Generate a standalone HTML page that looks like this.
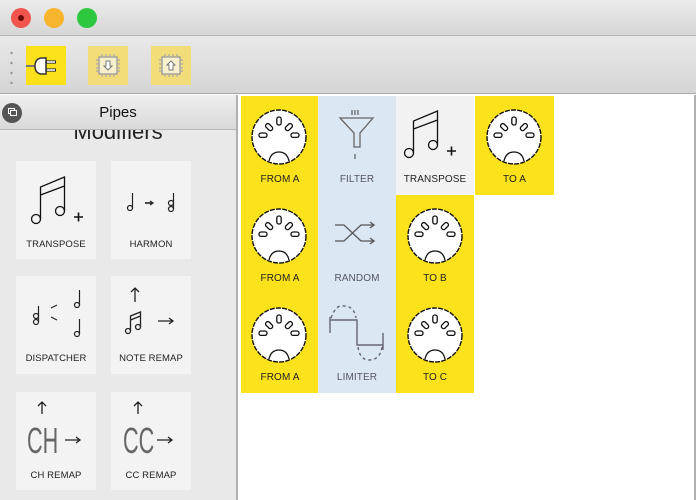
<!DOCTYPE html>
<html><head><meta charset="utf-8"><style>
*{margin:0;padding:0;box-sizing:border-box}
body{width:696px;height:500px;overflow:hidden;background:#fff;font-family:"Liberation Sans",sans-serif;position:relative}
.a{position:absolute}
.lbl{position:absolute;left:0;right:0;text-align:center;font-size:10px;color:#222;letter-spacing:0.1px}
.cell{position:absolute;width:78px;height:99px}
.tile{position:absolute;width:80px;height:98px;background:#f3f3f3}
.big{position:absolute;font-size:36px;line-height:36px;color:#666;transform:scaleX(.6);transform-origin:left;font-family:"Liberation Sans Narrow","Liberation Sans",sans-serif}
</style></head><body>
<svg width="0" height="0" style="position:absolute"><defs>
<g id="din">
<circle cx="0" cy="0" r="27" fill="#fff" stroke="#111" stroke-width="1.4" stroke-dasharray="5 1.2"/>
<rect x="-2.2" y="-20" width="4.4" height="8" rx="2" fill="none" stroke="#111" stroke-width="1.3"/>
<rect x="-2.2" y="-16" width="4.4" height="8" rx="2" fill="none" stroke="#111" stroke-width="1.3" transform="rotate(-45) translate(0,-2)"/>
<rect x="-2.2" y="-16" width="4.4" height="8" rx="2" fill="none" stroke="#111" stroke-width="1.3" transform="rotate(45) translate(0,-2)"/>
<rect x="-20" y="-4" width="8" height="4.4" rx="2" fill="none" stroke="#111" stroke-width="1.3"/>
<rect x="12" y="-4" width="8" height="4.4" rx="2" fill="none" stroke="#111" stroke-width="1.3"/>
<path d="M-10 24 Q-8 15 0 15 Q8 15 10 24" fill="#fff" stroke="#111" stroke-width="1.3"/>
</g>
<g id="transp" fill="none" stroke="#111" stroke-width="1.3">
<circle cx="-14" cy="20" r="4.5"/><circle cx="10" cy="12" r="4.5"/>
<path d="M-9.5 20 V-12 L14.5 -22 V12 M-9.5 -4 L14.5 -13"/>
<path d="M24 18 h9 M28.5 13.5 v9" stroke-width="1.6"/>
</g>
</defs></svg>

<div class="a" style="left:0;top:0;width:696px;height:36px;background:linear-gradient(#ececec,#d6d6d6);border-bottom:1px solid #b5b5b5"></div>
<div class="a" style="left:11px;top:8px;width:20px;height:20px;border-radius:50%;background:#f0544c"></div>
<div class="a" style="left:18px;top:15px;width:6px;height:6px;border-radius:50%;background:#6b0b07"></div>
<div class="a" style="left:44px;top:8px;width:20px;height:20px;border-radius:50%;background:#f7b52d"></div>
<div class="a" style="left:77px;top:8px;width:20px;height:20px;border-radius:50%;background:#2ec840"></div>
<div class="a" style="left:0;top:36px;width:696px;height:58px;background:linear-gradient(#e9e9e9,#d5d5d5);border-bottom:1px solid #a9a9a9"></div>
<div class="a" style="left:10px;top:48px;width:3px;height:36px;background:radial-gradient(circle,#999 1px,transparent 1.5px) 0 0/3px 10px"></div>
<div class="a" style="left:26px;top:46px;width:40px;height:39px;background:#fbe11a">
<svg width="40" height="39"><path d="M0 20 H12" stroke="#777" stroke-width="2"/><path d="M20 12 H15 Q9 13 9 20 Q9 27 15 28 H20 Z" fill="#fff" stroke="#333" stroke-width="1.5"/><path d="M20 16 H30 M20 24 H30" stroke="#333" stroke-width="3.2"/><path d="M21 16 H29 M21 24 H29" stroke="#fff" stroke-width="1.4"/></svg></div>
<div class="a" style="left:88px;top:46px;width:40px;height:39px;background:#f2dd7a">
<svg width="40" height="39"><rect x="11" y="11" width="18" height="17" fill="#f6f0cc" stroke="#999" stroke-width="1.3"/><path d="M14 8v3M18 8v3M22 8v3M26 8v3M14 28v3M18 28v3M22 28v3M26 28v3M8 14h3M8 18h3M8 22h3M8 25h3M29 14h3M29 18h3M29 22h3M29 25h3" stroke="#aaa" stroke-width="1.2"/><path d="M18 15v5h-2l4 4 4-4h-2v-5z" fill="#fff" stroke="#777"/></svg></div>
<div class="a" style="left:151px;top:46px;width:40px;height:39px;background:#f2dd7a">
<svg width="40" height="39"><rect x="11" y="11" width="18" height="17" fill="#f6f0cc" stroke="#999" stroke-width="1.3"/><path d="M14 8v3M18 8v3M22 8v3M26 8v3M14 28v3M18 28v3M22 28v3M26 28v3M8 14h3M8 18h3M8 22h3M8 25h3M29 14h3M29 18h3M29 22h3M29 25h3" stroke="#aaa" stroke-width="1.2"/><path d="M18 24v-5h-2l4-4 4 4h-2v5z" fill="#fff" stroke="#777"/></svg></div>

<div class="a" style="left:0;top:95px;width:238px;height:405px;background:#e9e9e9;border-right:2px solid #b0b0b0;overflow:hidden">
<div class="a" style="left:0;top:26px;width:236px;text-align:center;font-size:22px;line-height:22px;color:#222">Modifiers</div>
<div class="a" style="left:0;top:0;width:236px;height:35px;background:linear-gradient(#efefef,#d9d9d9);border-bottom:1px solid #b8b8b8"></div>
<div class="a" style="left:0;top:9px;width:236px;text-align:center;font-size:15px;color:#111">Pipes</div>
<div class="a" style="left:2px;top:8px;width:20px;height:20px;border-radius:50%;background:#555"></div>
<div class="a" style="left:8px;top:13px;width:7px;height:6px;border:1.3px solid #fff"></div>
<div class="a" style="left:10px;top:15px;width:7px;height:6px;border:1.3px solid #fff;background:#555"></div>
</div>
<div class="tile" style="left:16px;top:161px"><svg width="80" height="75"><use href="#transp" x="34" y="38"/></svg><div class="lbl" style="top:78px;font-size:9.5px">TRANSPOSE</div></div>
<div class="tile" style="left:111px;top:161px"><svg width="80" height="75" fill="none" stroke="#222" stroke-width="1.2"><circle cx="19" cy="47" r="2.5"/><path d="M21.5 47V32"/><path d="M34 42h7" stroke-width="1.6"/><path d="M39 40l3 2-3 2"/><circle cx="60" cy="48" r="2.5"/><circle cx="60" cy="42" r="2.5"/><path d="M62.5 48V32"/></svg><div class="lbl" style="top:78px;font-size:9.5px">HARMON</div></div>
<div class="tile" style="left:16px;top:276px"><svg width="80" height="85" fill="none" stroke="#222" stroke-width="1.2"><circle cx="20" cy="46" r="2.5"/><circle cx="20" cy="40" r="2.5"/><path d="M22.5 46V30"/><path d="M35 32l6-3M35 41l6 3"/><circle cx="61" cy="29" r="2.5"/><path d="M63.5 29V14"/><circle cx="61" cy="58" r="2.5"/><path d="M63.5 58V43"/></svg><div class="lbl" style="top:77px;font-size:9.5px">DISPATCHER</div></div>
<div class="tile" style="left:111px;top:276px"><svg width="80" height="85" fill="none" stroke="#222" stroke-width="1.3"><path d="M24 26V12M20 16l4-4 4 4"/><circle cx="17" cy="55" r="2.5"/><circle cx="27" cy="51" r="2.5"/><path d="M19.5 55V40L29.5 36V51M19.5 44l10-4"/><path d="M47 45h15M58 42l4 3-4 3"/></svg><div class="lbl" style="top:77px;font-size:9.5px">NOTE REMAP</div></div>
<div class="tile" style="left:16px;top:392px"><svg width="80" height="75" fill="none" stroke="#222" stroke-width="1.3"><path d="M26 22V10M22 14l4-4 4 4"/><path d="M49 48h15M60 45l4 3-4 3"/></svg><div class="big" style="left:11px;top:31px">CH</div><div class="lbl" style="top:78px;font-size:9.5px">CH REMAP</div></div>
<div class="tile" style="left:111px;top:392px"><svg width="80" height="75" fill="none" stroke="#222" stroke-width="1.3"><path d="M27 22V10M23 14l4-4 4 4"/><path d="M46 48h15M57 45l4 3-4 3"/></svg><div class="big" style="left:12px;top:31px">CC</div><div class="lbl" style="top:78px;font-size:9.5px">CC REMAP</div></div>

<div class="a" style="left:694px;top:95px;width:2px;height:405px;background:#b0b0b0"></div>
<div class="cell" style="left:241px;top:96px;background:#fce21a"><svg width="78" height="80"><use href="#din" x="38" y="41"/></svg><div class="lbl" style="top:78px">FROM A</div></div>
<div class="cell" style="left:241px;top:195px;background:#fce21a"><svg width="78" height="80"><use href="#din" x="38" y="41"/></svg><div class="lbl" style="top:78px">FROM A</div></div>
<div class="cell" style="left:241px;top:294px;background:#fce21a"><svg width="78" height="80"><use href="#din" x="38" y="41"/></svg><div class="lbl" style="top:78px">FROM A</div></div>
<div class="cell" style="left:318px;top:96px;height:297px;background:#dce7f4"></div>
<div class="cell" style="left:318px;top:96px"><svg width="78" height="80" fill="none" stroke="#666" stroke-width="1.3"><path d="M34 14v5M37 14v5M40 14v5M22 22h33L42 37v14h-6V37Z"/><path d="M37 58v5"/></svg><div class="lbl" style="top:78px;color:#556">FILTER</div></div>
<div class="cell" style="left:318px;top:195px"><svg width="78" height="80" fill="none" stroke="#555" stroke-width="1.3"><path d="M17 30h9l17 16h12M17 46h9l17-16h12M52 27l4 3-4 3M52 43l4 3-4 3"/></svg><div class="lbl" style="top:78px;color:#556">RANDOM</div></div>
<div class="cell" style="left:318px;top:294px"><svg width="78" height="80" fill="none" stroke="#667" stroke-width="1.4"><path d="M12 23v16M12 26h27v25h26M65 39v17"/><path d="M13 24Q18 10 26 12Q36 12 38 24" stroke-dasharray="3 3"/><path d="M40 53Q42 66 51 66Q62 66 64 53" stroke-dasharray="3 3"/></svg><div class="lbl" style="top:78px;color:#556">LIMITER</div></div>
<div class="cell" style="left:396px;top:96px;background:#f2f2f2"><svg width="78" height="80"><use href="#transp" x="27" y="37"/></svg><div class="lbl" style="top:78px">TRANSPOSE</div></div>
<div class="cell" style="left:396px;top:195px;height:198px;background:#fce21a"></div>
<div class="cell" style="left:396px;top:195px"><svg width="78" height="80"><use href="#din" x="39" y="41"/></svg><div class="lbl" style="top:78px">TO B</div></div>
<div class="cell" style="left:396px;top:294px"><svg width="78" height="80"><use href="#din" x="39" y="41"/></svg><div class="lbl" style="top:78px">TO C</div></div>
<div class="cell" style="left:475px;top:96px;width:79px;background:#fce21a"><svg width="78" height="80"><use href="#din" x="39" y="41"/></svg><div class="lbl" style="top:78px">TO A</div></div>
</body></html>
